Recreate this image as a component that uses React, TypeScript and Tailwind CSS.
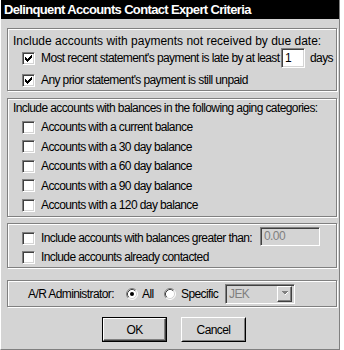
import React from "react";

const Check = () => (
  <svg width="13" height="13" viewBox="0 0 13 13" shapeRendering="crispEdges" className="absolute left-0 top-0">
    <rect x="9" y="3" width="1" height="1" fill="#000" />
    <rect x="8" y="4" width="2" height="1" fill="#000" />
    <rect x="3" y="5" width="1" height="1" fill="#000" />
    <rect x="7" y="5" width="3" height="1" fill="#000" />
    <rect x="3" y="6" width="2" height="1" fill="#000" />
    <rect x="6" y="6" width="3" height="1" fill="#000" />
    <rect x="3" y="7" width="5" height="1" fill="#000" />
    <rect x="4" y="8" width="3" height="1" fill="#000" />
    <rect x="5" y="9" width="1" height="1" fill="#000" />
  </svg>
);

const CheckBox = ({ checked }: { checked?: boolean }) => (
  <div className="relative w-[13px] h-[13px] shrink-0 bg-white border border-t-[#808080] border-l-[#808080] border-b-white border-r-white shadow-[inset_1px_1px_0_#404040,inset_-1px_-1px_0_#d4d4d4]">
    {checked && <div className="absolute -left-px -top-px w-[13px] h-[13px]"><Check /></div>}
  </div>
);

const Radio = ({ checked }: { checked?: boolean }) => (
  <svg width="12" height="12" viewBox="0 0 12 12" className="shrink-0">
    <circle cx="6" cy="6" r="5" fill="#fff" />
    <path d="M2.11 9.89 A5.5 5.5 0 0 1 9.89 2.11" stroke="#808080" strokeWidth="1" fill="none" />
    <path d="M9.89 2.11 A5.5 5.5 0 0 1 2.11 9.89" stroke="#ffffff" strokeWidth="1" fill="none" />
    <path d="M2.82 9.18 A4.5 4.5 0 0 1 9.18 2.82" stroke="#404040" strokeWidth="1" fill="none" />
    <path d="M9.18 2.82 A4.5 4.5 0 0 1 2.82 9.18" stroke="#d4d4d4" strokeWidth="1" fill="none" />
    {checked && <circle cx="6" cy="6" r="2" fill="#000" />}
  </svg>
);

const Row = ({ checked, children, cls }: { checked?: boolean; children: React.ReactNode; cls: string }) => (
  <div className={`flex items-center pl-[14px] ${cls}`}>
    <CheckBox checked={checked} />
    <span className="ml-[6px] whitespace-nowrap">{children}</span>
  </div>
);

const groupCls =
  "ml-[6px] w-[330px] border border-[#808080] shadow-[inset_1px_1px_0_#fff,1px_1px_0_#fff] flex flex-col";

const sunken =
  "border border-t-[#808080] border-l-[#808080] border-b-white border-r-white shadow-[inset_1px_1px_0_#404040,inset_-1px_-1px_0_#d4d4d4]";

const raised =
  "border border-t-white border-l-white border-b-[#404040] border-r-[#404040] shadow-[inset_-1px_-1px_0_#808080]";

export default function App() {
  return (
    <div className="w-[344px] h-[350px] bg-white font-['Liberation_Sans',Arial,sans-serif] text-[12px] leading-[14px] tracking-[-0.6px] text-black">
      <div className="w-[340px] h-[350px] bg-[#d4d4d4] border-l border-l-white border-r border-r-[#808080] border-b border-b-[#808080] flex flex-col">
        <div className="h-[19px] bg-black text-white font-bold text-[13px] tracking-[-0.65px] pl-[3px] flex items-center whitespace-nowrap">
          Delinquent Accounts Contact Expert Criteria
        </div>

        {/* Group 1 */}
        <div className={`${groupCls} mt-[9px] h-[63px]`}>
          <div className="pt-[5px] pl-[5px] h-[19px] whitespace-nowrap tracking-normal">Include accounts with payments not received by due date:</div>
          <div className="flex items-center pl-[14px] h-[20px]">
            <CheckBox checked />
            <span className="ml-[6px] w-[240px] whitespace-nowrap">Most recent statement's payment is late by at least</span>
            <div className={`w-[24px] h-[20px] bg-white ${sunken} pl-[3px] flex items-center`}>1</div>
            <span className="ml-[5px]">days</span>
          </div>
          <Row checked cls="h-[20px] mt-[2px]">Any prior statement's payment is still unpaid</Row>
        </div>

        {/* Group 2 */}
        <div className={`${groupCls} mt-[7px] h-[119px]`}>
          <div className="pt-[2px] pl-[5px] h-[16px] whitespace-nowrap">Include accounts with balances in the following aging categories:</div>
          <div className="mt-[2.5px] flex flex-col">
            <Row cls="h-[19.5px]">Accounts with a current balance</Row>
            <Row cls="h-[19.5px]">Accounts with a 30 day balance</Row>
            <Row cls="h-[19.5px]">Accounts with a 60 day balance</Row>
            <Row cls="h-[19.5px]">Accounts with a 90 day balance</Row>
            <Row cls="h-[19.5px]">Accounts with a 120 day balance</Row>
          </div>
        </div>

        {/* Group 3 */}
        <div className={`${groupCls} mt-[6px] h-[45px] pt-[4.5px]`}>
          <div className="flex items-center pl-[14px] h-[19px]">
            <CheckBox />
            <span className="ml-[6px] whitespace-nowrap">Include accounts with balances greater than:</span>
            <div className={`ml-auto mr-[16px] mb-[4px] w-[60px] h-[19px] ${sunken} pl-[3px] flex items-center text-[#808080]`}>0.00</div>
          </div>
          <Row cls="h-[19px]">Include accounts already contacted</Row>
        </div>

        {/* Group 4 */}
        <div className={`${groupCls} mt-[12px] h-[27px] flex-row items-center pl-[20px]`}>
          <span className="w-[98px] whitespace-nowrap">A/R Administrator:</span>
          <div className="w-[38px] flex items-center">
            <Radio checked />
            <span className="ml-[4px]">All</span>
          </div>
          <div className="w-[61px] flex items-center">
            <Radio />
            <span className="ml-[5px]">Specific</span>
          </div>
          <div className={`w-[70px] h-[20px] ${sunken} flex items-center pl-[3px] pr-[2px] text-[#808080]`}>
            <span className="flex-1">JEK</span>
            <div className={`w-[15px] h-[16px] bg-[#d4d4d4] ${raised} flex items-center justify-center`}>
              <svg width="7" height="5" viewBox="0 0 7 5" shapeRendering="crispEdges">
                <path d="M1 1h6L4 4z" fill="#fff" />
                <path d="M0 0h7L3.5 3.5z" fill="#808080" />
              </svg>
            </div>
          </div>
        </div>

        {/* Buttons */}
        <div className="mt-[10px] flex pl-[101px] gap-[14px]">
          <div className="w-[65px] h-[25px] border border-black">
            <div className={`w-full h-full ${raised} flex items-center justify-center`}>OK</div>
          </div>
          <div className="w-[65px] h-[25px] border border-t-white border-l-white border-b-black border-r-black">
            <div className="w-full h-full border border-t-[#d4d4d4] border-l-[#d4d4d4] border-b-[#808080] border-r-[#808080] flex items-center justify-center">Cancel</div>
          </div>
        </div>
      </div>
    </div>
  );
}
